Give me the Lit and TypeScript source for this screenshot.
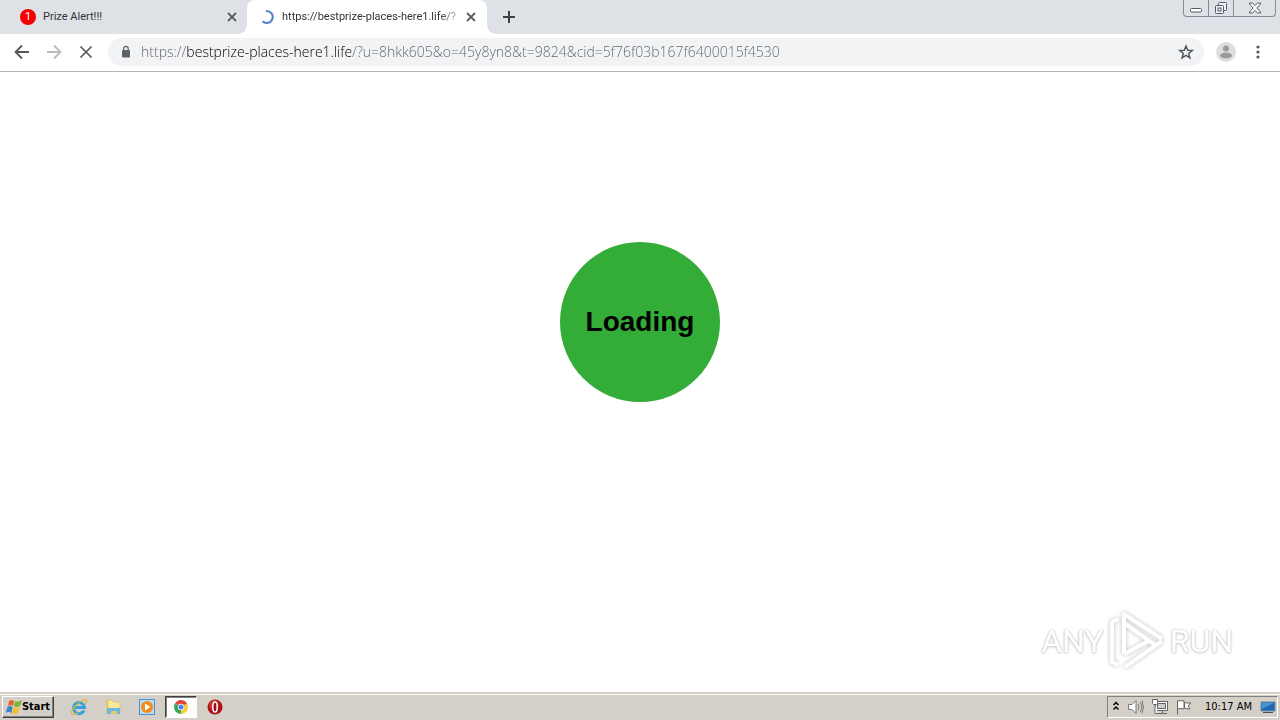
import { LitElement, html, css } from "lit";
import { customElement, property } from "lit/decorators.js";

const close = html`<svg width="10" height="10" viewBox="0 0 10 10"><path d="M1 1l8 8M9 1l-8 8" stroke="#5a5e63" stroke-width="1.800" fill="none"/></svg>`;

@customElement("browser-tabs")
class BrowserTabs extends LitElement {
  static styles = css`
    :host { display: flex; height: 34px; background: #dee1e6; font: 11px/16px Roboto, sans-serif; color: #2f3338; }
    button { border: 0; padding: 0; margin: 0; background: none; font: inherit; color: inherit; display: flex; align-items: center; justify-content: center; }
    .tabs { display: flex; }
    .tab { width: 240px; box-sizing: border-box; display: flex; align-items: center; padding-left: 20px; }
    .tab.active { background: #fff; border-radius: 8px 8px 0 0; margin-left: 7px; padding-left: 12px; position: relative; }
    .tab.active::before, .tab.active::after { content: ""; position: absolute; bottom: 0; width: 8px; height: 8px; }
    .tab.active::before { left: -8px; background: radial-gradient(circle at 0 0, #dee1e6 7px, #fff 8px); }
    .tab.active::after { right: -8px; background: radial-gradient(circle at 100% 0, #dee1e6 7px, #fff 8px); }
    .select { flex: 1; min-width: 0; gap: 7px; justify-content: flex-start; height: 34px; }
    .title { white-space: nowrap; text-align: left; }
    .fade { mask-image: linear-gradient(to right, #000 90%, #0006); }
    .close { width: 16px; height: 16px; flex: none; }
    .active .close { margin-right: 8px; }
    .badge { width: 16px; height: 16px; border-radius: 50%; background: #f50000; color: #fff; text-align: center; }
    .plus { width: 28px; margin-left: 8px; }
    .controls { margin-left: auto; margin-right: 4px; height: 16px; display: flex; border: 1px solid #858a96; border-top: 0; border-radius: 0 0 4px 4px; }
    .controls button { width: 25px; height: 16px; border-right: 1px solid #858a96; }
    .controls button:last-child { width: 41px; border: 0; }
  `;
  render() {
    return html`
      <div class="tabs">
        <div class="tab">
          <button class="select"><span class="badge">1</span><span class="title">Prize Alert!!!</span></button>
          <button class="close" aria-label="Close tab">${close}</button>
        </div>
        <div class="tab active">
          <button class="select">
            <svg width="16" height="16" viewBox="0 0 16 16"><path d="M7 2a6 6 0 1 1-3.500 10.200" stroke="#5482c8" stroke-width="2" fill="none"/></svg>
            <span class="title fade">https://bestprize-places-here1.life/?</span>
          </button>
          <button class="close" aria-label="Close tab">${close}</button>
        </div>
      </div>
      <button class="plus" aria-label="New tab"><svg width="12" height="12" viewBox="0 0 12 12"><path d="M6 0v12M0 6h12" stroke="#3c4043" stroke-width="2"/></svg></button>
      <div class="controls">
        <button aria-label="Minimize"><svg width="12" height="14" viewBox="0 0 12 14"><rect x=".5" y="7.500" width="11" height="3.500" rx="1" fill="#fff" stroke="#555b66"/></svg></button>
        <button aria-label="Restore"><svg width="13" height="14" viewBox="0 0 13 14" fill="#eef0f3" stroke="#555b66"><rect x="3.500" y="1.500" width="8" height="8" rx="1"/><rect x=".5" y="4.500" width="8" height="8" rx="1"/><rect x="3" y="7" width="3" height="3"/></svg></button>
        <button aria-label="Close window"><svg width="12" height="12" viewBox="0 0 12 12"><path d="M.5 1h3L6 3.500 8.500 1h3v1L8 6l3.500 4v1h-3L6 8.500 3.500 11h-3v-1L4 6 .5 2z" fill="#f3f4f6" stroke="#555b66"/></svg></button>
      </div>`;
  }
}

@customElement("browser-toolbar")
class BrowserToolbar extends LitElement {
  @property() url = "https://bestprize-places-here1.life/?u=8hkk605&o=45y8yn8&t=9824&cid=5f76f03b167f6400015f4530";
  static styles = css`
    :host { display: flex; align-items: center; height: 36px; background: #fff; border-bottom: 1px solid #b5b5b5; padding: 0 6px 1px; }
    button { border: 0; padding: 0; background: none; width: 32px; height: 32px; display: flex; align-items: center; justify-content: center; }
    .box { flex: 1; height: 28px; margin: 0 6px; background: #f1f3f4; border-radius: 14px; display: flex; align-items: center; padding: 0 2px 0 12px; gap: 9px; }
    input { flex: 1; min-width: 0; border: 0; padding: 0; margin: 0; outline: 0; height: 24px; font: 300 14px/24px "Open Sans", sans-serif; color: #5f6368;
      background: linear-gradient(to right, #5f6368 45px, #000 45px, #000 210px, #5f6368 210px); -webkit-background-clip: text; background-clip: text; -webkit-text-fill-color: transparent; }
  `;
  render() {
    return html`
      <button aria-label="Back"><svg width="16" height="16" viewBox="0 0 16 16"><path d="M15 8H2M8 1.500L1.500 8 8 14.500" stroke="#54585c" stroke-width="1.800" fill="none"/></svg></button>
      <button aria-label="Forward"><svg width="16" height="16" viewBox="0 0 16 16"><path d="M1 8h13M8 1.500L14.500 8 8 14.500" stroke="#b9bbbd" stroke-width="1.800" fill="none"/></svg></button>
      <button aria-label="Stop loading"><svg width="14" height="14" viewBox="0 0 14 14"><path d="M1.500 1.500l11 11M12.500 1.500l-11 11" stroke="#54585c" stroke-width="1.700"/></svg></button>
      <div class="box">
        <svg width="12" height="14" viewBox="0 0 12 14"><rect x="2" y="5" width="8" height="7.500" rx="1" fill="#5f6368"/><path d="M3.800 6V3.500a2.200 2.200 0 0 1 4.400 0V6" fill="none" stroke="#5f6368" stroke-width="1.200"/></svg>
        <input aria-label="Address" spellcheck="false" .value=${this.url}>
        <button aria-label="Bookmark"><svg width="16" height="16" viewBox="0 0 16 16"><path d="M8 2l1.700 4.200 4.500.3-3.500 2.900 1.200 4.400L8 11.400l-3.900 2.400 1.200-4.400-3.500-2.900 4.500-.3z" fill="none" stroke="#54585c" stroke-width="1.500"/></svg></button>
      </div>
      <button aria-label="Profile"><svg width="20" height="20" viewBox="0 0 20 20"><circle cx="10" cy="10" r="10" fill="#dedede"/><circle cx="10" cy="6.500" r="3" fill="#9b9b9b"/><ellipse cx="10" cy="13.500" rx="6" ry="3" fill="#9b9b9b"/></svg></button>
      <button aria-label="Menu"><svg width="4" height="14" viewBox="0 0 4 14" fill="#54585c"><circle cx="2" cy="2" r="1.600"/><circle cx="2" cy="7" r="1.600"/><circle cx="2" cy="12" r="1.600"/></svg></button>`;
  }
}

@customElement("task-bar")
class TaskBar extends LitElement {
  static styles = css`
    :host { display: flex; align-items: center; height: 22px; background: #d4d0c8; border-top: 1px solid #d4d0c8; box-shadow: inset 0 1px #fff; padding: 2px; font: 11px/16px "DejaVu Sans Condensed", sans-serif; color: #000; }
    button { border: 0; padding: 0; background: none; font: inherit; color: inherit; display: flex; align-items: center; justify-content: center; }
    .start { width: 52px; height: 22px; box-sizing: border-box; font: bold 11px/16px "DejaVu Sans Condensed", sans-serif; border: 1px solid; border-color: #fff #404040 #404040 #fff; box-shadow: inset -1px -1px #808080; }
    .apps { display: flex; margin-left: 9px; gap: 2px; }
    .apps button { width: 32px; height: 22px; box-sizing: border-box; }
    .apps .current { background: #fff; border: 1px solid; border-color: #404040 #fff #fff #404040; box-shadow: inset 1px 1px #808080; }
    .tray { margin-left: auto; height: 20px; display: flex; align-items: center; gap: 8px; border: 1px solid; border-color: #808080 #fff #fff #808080; padding: 0 1px 0 4px; }
    .time { margin-left: 5px; white-space: nowrap; }
  `;
  render() {
    return html`
      <button class="start">
        <svg width="16" height="16" viewBox="0 0 16 16"><path d="M3 2q3-2 5 0L7 7Q5 5 2 7z" fill="#e8602c"/><path d="M9 2q3 2 7-1l-2 6q-3 2-6 0z" fill="#75b63b"/><path d="M1.500 8q3-2 5 0l-1 6q-3-2-6 0z" fill="#3c82cf"/><path d="M7.500 8q3 2 6 0l-1.500 6q-3 2-6 0z" fill="#f4be2c"/></svg>Start
      </button>
      <div class="apps">
        <button aria-label="Internet Explorer"><svg width="18" height="18" viewBox="0 0 18 18" fill="none"><path d="M14 12.500A5.500 5.500 0 1 1 14.500 9.500H5" stroke="#36a3df" stroke-width="3"/><path d="M2 16C-1 13 12 0 16 2c1 1 0 3-1 4M2 16q2 1 6-1" stroke="#e3b52d" stroke-width="1.200"/></svg></button>
        <button aria-label="File Explorer"><svg width="18" height="18" viewBox="0 0 18 18"><path d="M2 3h5l1 2h7v11H2z" fill="#e8c867"/><path d="M4 2h4l1 2h7v7H4z" fill="#fae99c" stroke="#d4b450" stroke-width=".6"/><path d="M3 10h13v6h-3v-3H7v3H3z" fill="#67b8e3"/></svg></button>
        <button aria-label="Media Player"><svg width="16" height="16" viewBox="0 0 16 16"><rect x=".5" y=".5" width="15" height="15" fill="#b9dcf5" stroke="#4c92cd"/><circle cx="8" cy="8" r="6" fill="#f38b1c"/><path d="M6 4.500L11.500 8 6 11.500z" fill="#fff"/></svg></button>
        <button class="current" aria-label="Chrome"><svg width="14" height="14" viewBox="0 0 14 14"><path d="M7 7L.94 3.500A7 7 0 0 1 13.060 3.500z" fill="#df4533"/><path d="M7 7l6.060-3.500A7 7 0 0 1 7 14z" fill="#f8cc39"/><path d="M7 7v7A7 7 0 0 1 .94 3.500z" fill="#3ca659"/><circle cx="7" cy="7" r="3.200" fill="#fff"/><circle cx="7" cy="7" r="2.500" fill="#4586ed"/></svg></button>
        <button aria-label="Opera"><svg width="16" height="16" viewBox="0 0 16 16"><circle cx="8" cy="8" r="7.500" fill="#ac1115"/><circle cx="7" cy="6" r="5" fill="#cf3433"/><ellipse cx="8" cy="8" rx="2.200" ry="5" fill="#9c1013" stroke="#fff" stroke-width="1.500"/></svg></button>
      </div>
      <div class="tray">
        <button aria-label="Show hidden icons"><svg width="8" height="12" viewBox="0 0 8 12"><path d="M1.500 4L4 1.500 6.500 4M1.500 8.500L4 6l2.500 2.500" stroke="#000" stroke-width="1.500" fill="none"/></svg></button>
        <button aria-label="Volume"><svg width="16" height="16" viewBox="0 0 16 16" fill="none" stroke="#777"><path d="M.5 5.500H4l4-4v13l-4-4H.5z" fill="#fff"/><path d="M10 5q2 3 0 6M12 3q3.500 5 0 10M14 1.500q3 6.500 0 13"/></svg></button>
        <button aria-label="Network"><svg width="16" height="16" viewBox="0 0 16 16" fill="#fff" stroke="#666"><rect x="3.500" y="2.500" width="12" height="9"/><rect x="5.500" y="4.500" width="8" height="5" fill="#ccc"/><path d="M6 14.500h9M10.500 12v2"/><path d="M.5.500h5v4l-1 1h-3l-1-1zM3 6v8.500h3" /></svg></button>
        <button aria-label="Action Center"><svg width="16" height="16" viewBox="0 0 16 16" fill="#fff" stroke="#666"><path d="M1.500 1.500v14M2 2q3-1 6 0v8q-3-1-6 0M8.500 3.500q3 1 6.500.5l-3 3 2 3q-3 0-5.500-1z"/></svg></button>
        <span class="time">10:17 AM</span>
        <button aria-label="Show desktop"><svg width="16" height="16" viewBox="0 0 16 16"><path d="M1 3h14v9H1z" fill="#2367b1" stroke="#6d8bab"/><path d="M2 4h12L2 10z" fill="#4793d7"/><path d="M3 13.500h10" stroke="#454f5d"/></svg></button>
      </div>`;
  }
}

@customElement("app-root")
class AppRoot extends LitElement {
  static styles = css`
    :host { display: flex; flex-direction: column; min-height: 100vh; background: #fff; }
    main { flex: 1; position: relative; display: flex; justify-content: center; padding-top: 170px; border-bottom: 1px solid #d4d0c8; }
    .loading { width: 160px; height: 160px; border-radius: 50%; background: #33ac38; display: flex; align-items: center; justify-content: center; font: bold 28px/32px "Liberation Sans", Arial, sans-serif; color: #000; }
    .mark { position: absolute; right: 47px; bottom: 19px; display: flex; align-items: center; gap: 4px; font: 32px/64px Roboto, sans-serif; color: #fff; text-shadow: 0 0 2px #bbb, 0 1px 3px #ccc; }
    .play { filter: drop-shadow(0 0 2px #bbb); }
  `;
  render() {
    return html`
      <browser-tabs></browser-tabs>
      <browser-toolbar></browser-toolbar>
      <main>
        <div class="loading">Loading</div>
        <div class="mark"><span>ANY</span>
          <svg class="play" width="58" height="62" viewBox="0 0 58 62" fill="none" stroke="#fff" stroke-width="4" stroke-linejoin="round"><path d="M16 44V4L54 29M16 13L47 35M16 44L42 30M54 31L17 57"/><path d="M10 9L4 12v40l6 3"/></svg>
          <span>RUN</span></div>
      </main>
      <task-bar></task-bar>`;
  }
}
